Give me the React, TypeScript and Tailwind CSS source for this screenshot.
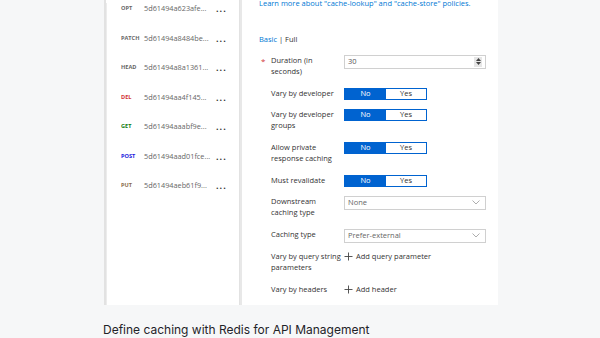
import React from 'react'

const font = { fontFamily: '"Open Sans", "Noto Sans", sans-serif' }

const methods = [
  { name: 'OPT', hash: '5d61494a623afe...', color: 'text-[#666]' },
  { name: 'PATCH', hash: '5d61494a8484be...', color: 'text-[#666]' },
  { name: 'HEAD', hash: '5d61494a8a1361...', color: 'text-[#666]' },
  { name: 'DEL', hash: '5d61494aa4f145...', color: 'text-[#d13438]' },
  { name: 'GET', hash: '5d61494aaabf9e...', color: 'text-[#107c10]' },
  { name: 'POST', hash: '5d61494aad01fce...', color: 'text-[#2222dd]' },
  { name: 'PUT', hash: '5d61494aeb61f9...', color: 'text-[#8a6d4d]' },
]

function Toggle() {
  return (
    <div className="flex h-[12px] w-[83px] border border-[#0063d0] text-[7.5px] leading-none">
      <div className="flex w-[41px] items-center justify-center bg-[#0063d0] text-white">No</div>
      <div className="flex flex-1 items-center justify-center bg-white text-[#333]">Yes</div>
    </div>
  )
}

function Select({ value }: { value: string }) {
  return (
    <div className="flex h-[14px] w-[142px] items-center justify-between border border-[#d0d0d0] bg-white pl-[3px] pr-[5px] text-[7.5px] text-[#666]">
      <span>{value}</span>
      <svg width="8" height="5" viewBox="0 0 8 5">
        <path d="M0.5 0.5 L4 4 L7.5 0.5" fill="none" stroke="#999" strokeWidth="0.8" />
      </svg>
    </div>
  )
}

function Row({ label, children, h, star }: { label: React.ReactNode; children: React.ReactNode; h: string; star?: boolean }) {
  return (
    <div className={`flex ${h}`}>
      <div className="w-[12px] pl-[2px] text-[8px] leading-[11px] text-[#d13438]">{star ? '*' : ''}</div>
      <div className="w-[73px] text-[7.5px] leading-[11px] text-[#333]">{label}</div>
      <div>{children}</div>
    </div>
  )
}

function Plus() {
  return (
    <svg width="9" height="9" viewBox="0 0 9 9" className="mr-[3px]">
      <path d="M4.5 0.5 V8.5 M0.5 4.5 H8.5" stroke="#444" strokeWidth="0.9" />
    </svg>
  )
}

export default function App() {
  return (
    <div className="flex h-[338px] w-[600px] flex-col bg-[#f6f7f8]">
      <div className="ml-[104px] flex h-[305px] w-[394px] bg-white" style={font}>
        {/* Operation list */}
        <div className="flex w-[136px] flex-col border-l-[2px] border-r border-[#e2e2e2] pl-[14px] pt-[3px]">
          <div className="ml-[-14px] h-full border-l border-[#ececec] pl-[14px]">
            {methods.map((m) => (
              <div key={m.name} className="flex h-[29.5px] items-start">
                <span className={`w-[23px] pt-[1px] text-[5.6px] font-bold ${m.color}`}>{m.name}</span>
                <span className="w-[72px] text-[7.3px] text-[#666]">{m.hash}</span>
                <span className="pt-[1px] text-[9px] font-bold leading-[9px] tracking-[1px] text-[#333]">...</span>
              </div>
            ))}
          </div>
        </div>

        {/* Policy form */}
        <div className="flex flex-1 flex-col border-l-[2px] border-[#e8e8e8] pl-[17px]">
          <div className="mt-[-2px] text-[7.5px] text-[#0078d4]">
            Learn more about "cache-lookup" and "cache-store" policies.
          </div>
          <div className="mb-[9px] mt-[25px] text-[7.5px] text-[#333]">
            <span className="text-[#0078d4]">Basic</span> | Full
          </div>
          <div className="flex flex-col">
            <Row star label={<>Duration (in<br />seconds)</>} h="h-[33px]">
              <div className="flex h-[14px] w-[142px] items-center justify-between border border-[#d0d0d0] pl-[3px] pr-[3px] text-[7.5px] text-[#555]">
                <span>30</span>
                <div className="flex h-[10px] w-[8px] flex-col items-center justify-center gap-[1px] bg-[#e6e6e6]">
                  <svg width="5" height="3" viewBox="0 0 5 3"><path d="M0 3 L2.5 0 L5 3Z" fill="#444" /></svg>
                  <svg width="5" height="3" viewBox="0 0 5 3"><path d="M0 0 L2.5 3 L5 0Z" fill="#444" /></svg>
                </div>
              </div>
            </Row>
            <Row label="Vary by developer" h="h-[21px]"><Toggle /></Row>
            <Row label={<>Vary by developer<br />groups</>} h="h-[33px]"><Toggle /></Row>
            <Row label={<>Allow private<br />response caching</>} h="h-[33px]"><Toggle /></Row>
            <Row label="Must revalidate" h="h-[21px]"><Toggle /></Row>
            <Row label={<>Downstream<br />caching type</>} h="h-[33px]"><Select value="None" /></Row>
            <Row label="Caching type" h="h-[22px]"><Select value="Prefer-external" /></Row>
            <Row label={<>Vary by query string<br />parameters</>} h="h-[33px]">
              <div className="flex items-center text-[7.5px] text-[#333]"><Plus />Add query parameter</div>
            </Row>
            <Row label="Vary by headers" h="h-[21px]">
              <div className="flex items-center text-[7.5px] text-[#333]"><Plus />Add header</div>
            </Row>
          </div>
        </div>
      </div>
      <div className="ml-[103px] mt-[18px] text-[12px] leading-[14px] text-[#1f2328]" style={{ fontFamily: 'Inter, sans-serif' }}>
        Define caching with Redis for API Management
      </div>
    </div>
  )
}
